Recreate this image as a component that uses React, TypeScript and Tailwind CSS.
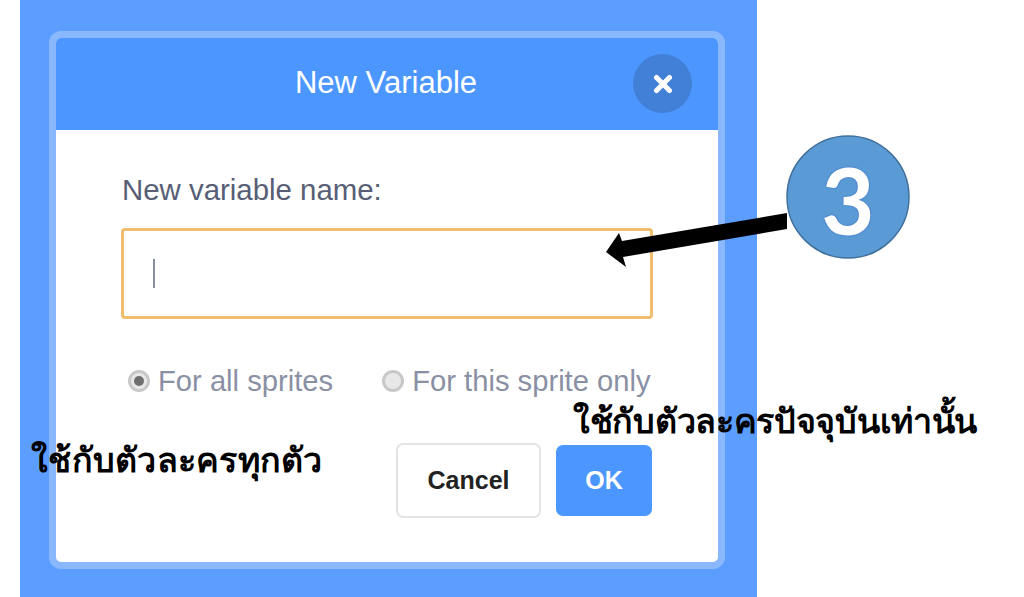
export default function App() {
  const font = "[font-family:'Liberation_Sans',Arial,sans-serif]";
  return (
    <div className={`relative w-[1024px] h-[597px] overflow-hidden bg-white ${font}`}>
      <div className="ml-[20px] w-[737px] h-[597px] bg-[#5c9eff] pt-[31px] pl-[29px]">
        <div className="w-[676px] h-[538px] border-[7px] border-[#8ab8ff] rounded-[12px] bg-white overflow-hidden flex flex-col">
          <div className="relative h-[92px] shrink-0 bg-[#4c97ff] flex items-center justify-center">
            <span className="text-white text-[31px] leading-none -ml-[2px] -mt-[3px]">New Variable</span>
            <div className="absolute right-[26px] top-[16px] w-[59px] h-[59px] rounded-full bg-[#4280d7] flex items-center justify-center">
              <svg width="20" height="20" viewBox="0 0 20 20">
                <path d="M3.5 3.5 L16.5 16.5 M16.5 3.5 L3.5 16.5" stroke="#fff" strokeWidth="5" strokeLinecap="round" />
              </svg>
            </div>
          </div>
          <div className="flex-1 px-[65px] flex flex-col">
            <div className="mt-[44px] h-[32px] text-[29.4px] leading-[32px] text-[#575e75] pl-[1px] whitespace-nowrap">New variable name:</div>
            <div className="mt-[22px] h-[91px] border-[3px] border-[#efbd6c] rounded-[4px] bg-white flex items-center pl-[29px]">
              <div className="w-[2px] h-[29px] bg-[#8a90a4]" />
            </div>
            <div className="mt-[44px] h-[36px] flex items-center text-[29.2px] text-[#8a90a4] whitespace-nowrap">
              <div className="ml-[7px] w-[22px] h-[22px] rounded-full border-[3px] border-[#c8c8c8] bg-[#e8e8e8] flex items-center justify-center">
                <div className="w-[10px] h-[10px] rounded-full bg-[#6e6e6e]" />
              </div>
              <span className="ml-[8px] pt-[2px]">For all sprites</span>
              <div className="ml-[49px] w-[22px] h-[22px] rounded-full border-[3px] border-[#c8c8c8] bg-[#e8e8e8]" />
              <span className="ml-[8px] pt-[2px]">For this sprite only</span>
            </div>
            <div className="mt-[44px] flex items-center justify-end gap-[15px]">
              <div className="w-[145px] h-[75px] rounded-[7px] border-[2px] border-[#e4e4e4] bg-white flex items-center justify-center text-[25px] font-bold text-[#222]">Cancel</div>
              <div className="w-[96px] h-[71px] rounded-[7px] bg-[#4c97ff] flex items-center justify-center text-[25px] font-bold text-white mr-px">OK</div>
            </div>
          </div>
        </div>
      </div>

      <svg className="absolute left-[600px] top-[130px]" width="315" height="140" viewBox="600 130 315 140">
        <polygon points="787,213 787,229 623,257 626,267 606,252 619,233 622,241" fill="#000" />
        <circle cx="848" cy="197" r="61" fill="#5b9bd5" stroke="#41719c" strokeWidth="1.5" />
      </svg>
      <div className="absolute left-[787px] top-[139px] w-[122px] h-[122px] flex items-center justify-center text-[92px] leading-none font-bold text-white [font-family:'Lato',sans-serif] [text-shadow:0_0_2px_#2f5fc0]">3</div>

      <div className="absolute left-[31px] top-[437px] text-[34px] leading-[44px] font-bold text-black whitespace-nowrap tracking-[0.25px] [font-family:'Noto_Sans','DejaVu_Sans',sans-serif]">ใช้กับตัวละครทุกตัว</div>
      <div className="absolute left-[573px] top-[398px] text-[34px] leading-[44px] font-bold text-black whitespace-nowrap tracking-[-0.3px] [font-family:'Noto_Sans','DejaVu_Sans',sans-serif]">ใช้กับตัวละครปัจจุบันเท่านั้น</div>
    </div>
  );
}
